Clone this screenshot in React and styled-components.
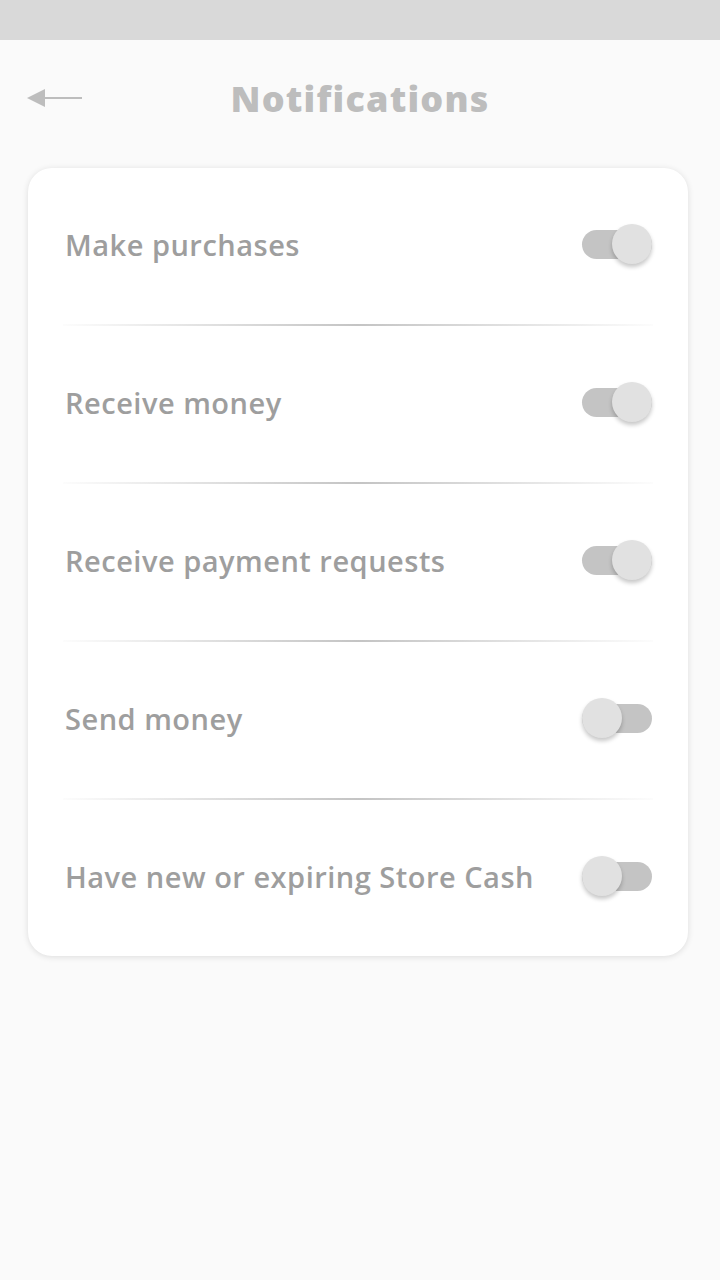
import React, { useState } from "react";
import styled, { createGlobalStyle } from "styled-components";

const Global = createGlobalStyle`
  html, body { margin: 0; padding: 0; background: #fafafa; }
  body { font-family: "Open Sans", "Noto Sans", sans-serif; }
  * { box-sizing: border-box; }
`;

const Page = styled.div`
  width: 720px;
  min-height: 1280px;
  background: #fafafa;
  display: flex;
  flex-direction: column;
`;

const StatusBar = styled.div`
  height: 40px;
  background: #d9d9d9;
`;

const Header = styled.header`
  height: 116px;
  display: grid;
  grid-template-columns: 1fr auto 1fr;
  align-items: center;
  padding: 0 27px;
  margin-bottom: 12px;
`;

const BackButton = styled.button`
  border: 0;
  background: none;
  padding: 0;
  width: 56px;
  height: 20px;
  display: flex;
  align-items: center;
  cursor: pointer;
  justify-self: start;
`;

const Title = styled.h1`
  margin: 0;
  text-align: center;
  font-family: "Open Sans", sans-serif;
  font-weight: 800;
  font-size: 36px;
  letter-spacing: 1.2px;
  color: #bdbdbd;
`;

const Card = styled.section`
  margin: 0 32px 0 28px;
  background: #ffffff;
  border-radius: 24px;
  box-shadow: 0 1px 6px rgba(0, 0, 0, 0.12);
  padding: 0 36px 0 37px;
  display: flex;
  flex-direction: column;
`;

const Row = styled.div`
  height: 156px;
  padding-bottom: 4px;
  display: flex;
  align-items: center;
  justify-content: space-between;
`;

const Divider = styled.div`
  height: 2px;
  margin: 0 -1px 0 -2px;
  background: linear-gradient(
    to right,
    rgba(200, 200, 200, 0.05),
    #c4c4c4 50%,
    rgba(200, 200, 200, 0.05)
  );
`;

const Label = styled.span`
  font-family: "Open Sans", sans-serif;
  font-weight: 600;
  font-size: 29px;
  letter-spacing: 0.5px;
  color: #9e9e9e;
`;

const Track = styled.button`
  position: relative;
  width: 70px;
  height: 29px;
  border: 0;
  padding: 0;
  border-radius: 15px;
  background: #c4c4c4;
  cursor: pointer;
  flex-shrink: 0;
`;

const Knob = styled.span`
  position: absolute;
  top: -6px;
  left: ${(p) => (p.$on ? "30px" : "0px")};
  width: 40px;
  height: 40px;
  border-radius: 50%;
  background: #e1e1e1;
  box-shadow: 0 3px 4px rgba(0, 0, 0, 0.22);
`;

const items = [
  { label: "Make purchases", on: true },
  { label: "Receive money", on: true },
  { label: "Receive payment requests", on: true },
  { label: "Send money", on: false },
  { label: "Have new or expiring Store Cash", on: false },
];

function Toggle({ on, onClick }) {
  return (
    <Track onClick={onClick} aria-pressed={on}>
      <Knob $on={on} />
    </Track>
  );
}

export default function App() {
  const [state, setState] = useState(items.map((i) => i.on));
  return (
    <Page>
      <Global />
      <StatusBar />
      <Header>
        <BackButton aria-label="Back">
          <svg width="56" height="20" viewBox="0 0 56 20">
            <polygon points="0,10 18,1 18,19" fill="#bdbdbd" />
            <rect x="16" y="9" width="39" height="2" fill="#bdbdbd" />
          </svg>
        </BackButton>
        <Title>Notifications</Title>
        <div />
      </Header>
      <Card>
        {items.map((it, i) => (
          <React.Fragment key={it.label}>
            {i > 0 && <Divider />}
            <Row>
              <Label>{it.label}</Label>
              <Toggle
                on={state[i]}
                onClick={() =>
                  setState((s) => s.map((v, j) => (j === i ? !v : v)))
                }
              />
            </Row>
          </React.Fragment>
        ))}
      </Card>
    </Page>
  );
}
